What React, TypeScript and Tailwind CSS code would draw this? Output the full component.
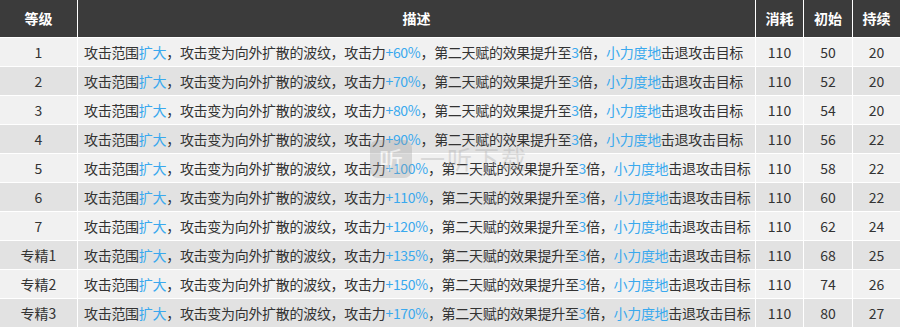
const rows = [
  { level: '1', atk: '+60%', cost: 110, init: 50, dur: 20 },
  { level: '2', atk: '+70%', cost: 110, init: 52, dur: 20 },
  { level: '3', atk: '+80%', cost: 110, init: 54, dur: 20 },
  { level: '4', atk: '+90%', cost: 110, init: 56, dur: 22 },
  { level: '5', atk: '+100%', cost: 110, init: 58, dur: 22 },
  { level: '6', atk: '+110%', cost: 110, init: 60, dur: 22 },
  { level: '7', atk: '+120%', cost: 110, init: 62, dur: 24 },
  { level: '专精1', atk: '+135%', cost: 110, init: 68, dur: 25 },
  { level: '专精2', atk: '+150%', cost: 110, init: 74, dur: 26 },
  { level: '专精3', atk: '+170%', cost: 110, init: 80, dur: 27 },
];

const font = { fontFamily: '"Noto Sans CJK SC", "Noto Sans", sans-serif' };

function Hi({ children }: { children: React.ReactNode }) {
  return <span className="text-[#3aa9ee]">{children}</span>;
}

export default function App() {
  return (
    <div className="relative w-[900px] h-[328px] bg-white overflow-hidden" style={font}>
      <div className="grid grid-cols-[77px_677px_47px_48px_47px] gap-px bg-white">
        {['等级', '描述', '消耗', '初始', '持续'].map((h) => (
          <div key={h} className="h-[37px] flex items-center justify-center bg-[#3b3b3b] text-white text-[14px] font-bold">
            {h}
          </div>
        ))}
        {rows.map((r, i) => {
          const bg = i % 2 === 0 ? 'bg-[#f1f1f1]' : 'bg-[#e2e2e2]';
          const cell = `${bg} h-[28px] flex items-center text-[14px] text-[#333333]`;
          return [
            <div key={r.level + 'a'} className={`${cell} justify-center`}>{r.level}</div>,
            <div key={r.level + 'b'} className={`${cell} pl-[6px] whitespace-nowrap tracking-[-0.3px]`}>
              攻击范围<Hi>扩大</Hi>，攻击变为向外扩散的波纹，攻击力<Hi>{r.atk}</Hi>，第二天赋的效果提升至<Hi>3</Hi>倍，<Hi>小力度地</Hi>击退攻击目标
            </div>,
            <div key={r.level + 'c'} className={`${cell} justify-center`}>{r.cost}</div>,
            <div key={r.level + 'd'} className={`${cell} justify-center`}>{r.init}</div>,
            <div key={r.level + 'e'} className={`${cell} justify-center`}>{r.dur}</div>,
          ];
        })}
      </div>

      {/* watermark */}
      <div className="absolute left-[370px] top-[140px] flex items-center gap-[8px] pointer-events-none opacity-[0.3]">
        <div className="w-[42px] h-[38px] rounded-[8px] bg-[#9a9a9a] flex items-center justify-center text-white text-[24px]">听</div>
        <span className="text-[#a0a0a0] text-[25px] tracking-[2px]">一听下载</span>
      </div>
    </div>
  );
}
